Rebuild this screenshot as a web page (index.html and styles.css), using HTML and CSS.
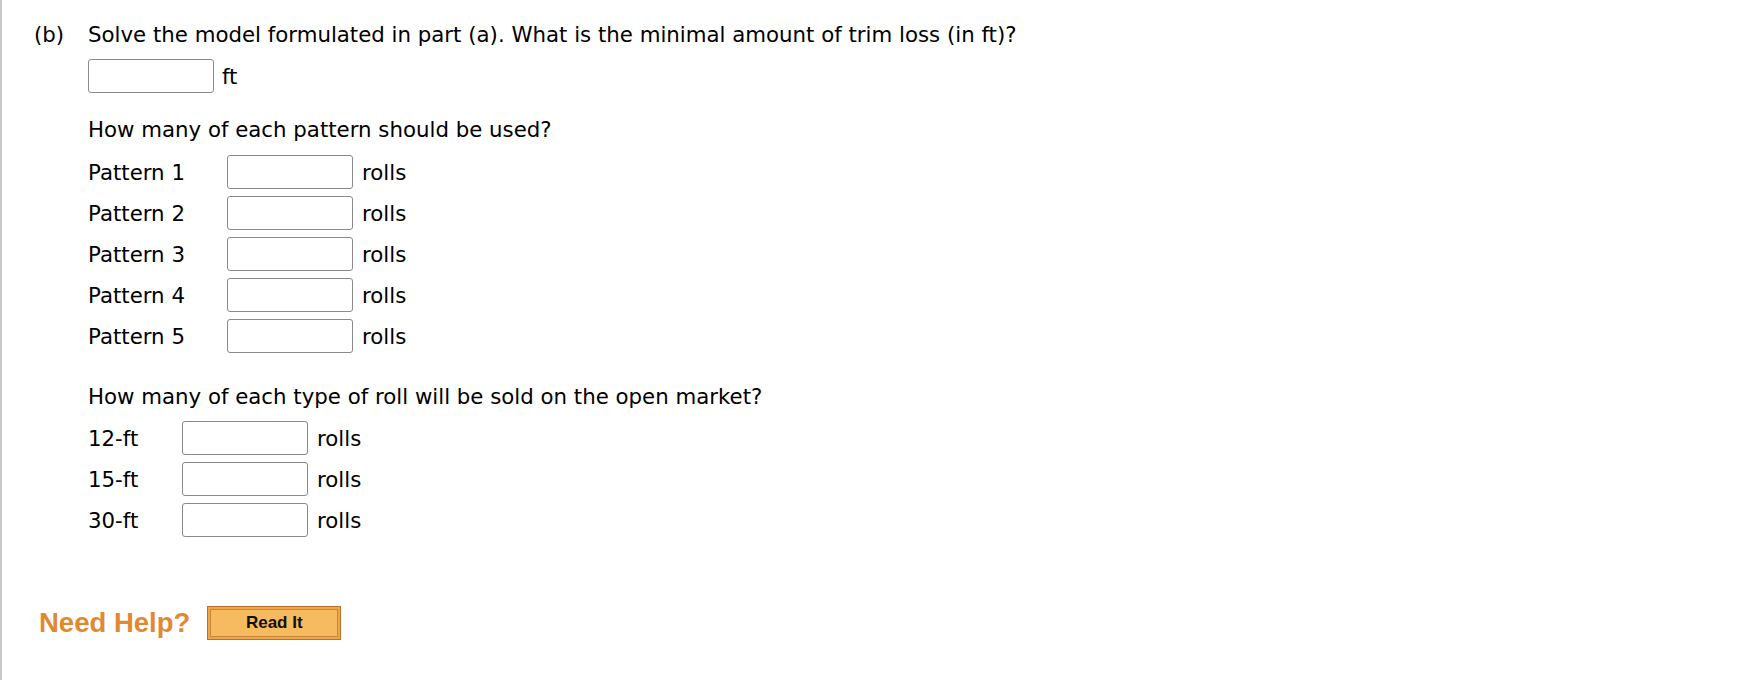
FILE: index.html
```html
<!DOCTYPE html>
<html>
<head>
<meta charset="utf-8">
<link rel="stylesheet" href="styles.css">
</head>
<body>
<div class="page">
  <div class="part">
    <div class="part-label">(b)</div>
    <div class="part-body">
      <p class="question">Solve the model formulated in part (a). What is the minimal amount of trim loss (in ft)?</p>
      <div class="answer-line">
        <input class="answer" type="text"><span class="unit">ft</span>
      </div>
      <p class="prompt">How many of each pattern should be used?</p>
      <div class="grid patterns">
        <span class="lbl">Pattern 1</span><input class="answer" type="text"><span class="unit">rolls</span>
        <span class="lbl">Pattern 2</span><input class="answer" type="text"><span class="unit">rolls</span>
        <span class="lbl">Pattern 3</span><input class="answer" type="text"><span class="unit">rolls</span>
        <span class="lbl">Pattern 4</span><input class="answer" type="text"><span class="unit">rolls</span>
        <span class="lbl">Pattern 5</span><input class="answer" type="text"><span class="unit">rolls</span>
      </div>
      <p class="prompt prompt2">How many of each type of roll will be sold on the open market?</p>
      <div class="grid rolls">
        <span class="lbl">12-ft</span><input class="answer" type="text"><span class="unit">rolls</span>
        <span class="lbl">15-ft</span><input class="answer" type="text"><span class="unit">rolls</span>
        <span class="lbl">30-ft</span><input class="answer" type="text"><span class="unit">rolls</span>
      </div>
    </div>
  </div>
  <div class="help">
    <span class="help-title">Need Help?</span>
    <button class="read-it" type="button"><span class="read-it-inner">Read It</span></button>
  </div>
</div>
</body>
</html>
```

FILE: styles.css
```css
html, body {
  margin: 0;
  padding: 0;
  background: #ffffff;
}

body {
  font-family: "DejaVu Sans", Verdana, sans-serif;
  font-size: 21.3px;
  color: #000;
}

.page {
  border-left: 2px solid #c8c8c8;
  min-height: 680px;
  box-sizing: border-box;
  padding: 22px 0 0 32px;
}

.part {
  display: flex;
}

.part-label {
  width: 54px;
  line-height: 26px;
}

.part-body {
  flex: 1;
}

.question {
  margin: 0;
  line-height: 26px;
}

.answer-line {
  display: flex;
  align-items: center;
  gap: 8px;
  margin-top: 11px;
}

.answer {
  box-sizing: border-box;
  width: 126px;
  height: 34px;
  margin: 0;
  padding: 0 4px;
  border: 1px solid #8a8a8a;
  border-radius: 3px;
  background: #fff;
  font: inherit;
}

.prompt {
  margin: 24px 0 0;
  line-height: 26px;
}

.prompt2 {
  margin-top: 31px;
}

.grid {
  display: grid;
  row-gap: 7px;
  align-items: center;
  margin-top: 12px;
}

.patterns {
  grid-template-columns: 139px 126px auto;
}

.rolls {
  margin-top: 11px;
  grid-template-columns: 94px 126px auto;
}

.grid .unit {
  padding-left: 9px;
}

.help {
  display: flex;
  align-items: center;
  gap: 17px;
  margin-top: 69px;
  padding-left: 5px;
}

.help-title {
  font-family: "Liberation Sans", Arial, sans-serif;
  font-weight: bold;
  font-size: 27.5px;
  color: #e2892f;
}

.read-it {
  box-sizing: border-box;
  width: 134px;
  height: 34px;
  padding: 2px;
  margin: 0;
  border: 1px solid #b8722e;
  background: #efa548;
  cursor: pointer;
  display: flex;
}

.read-it-inner {
  flex: 1;
  display: flex;
  align-items: center;
  justify-content: center;
  border: 1px solid #c8863a;
  background: #f5bb5e;
  font-family: "Liberation Sans", Arial, sans-serif;
  font-weight: bold;
  font-size: 17px;
  color: #111;
}
```
